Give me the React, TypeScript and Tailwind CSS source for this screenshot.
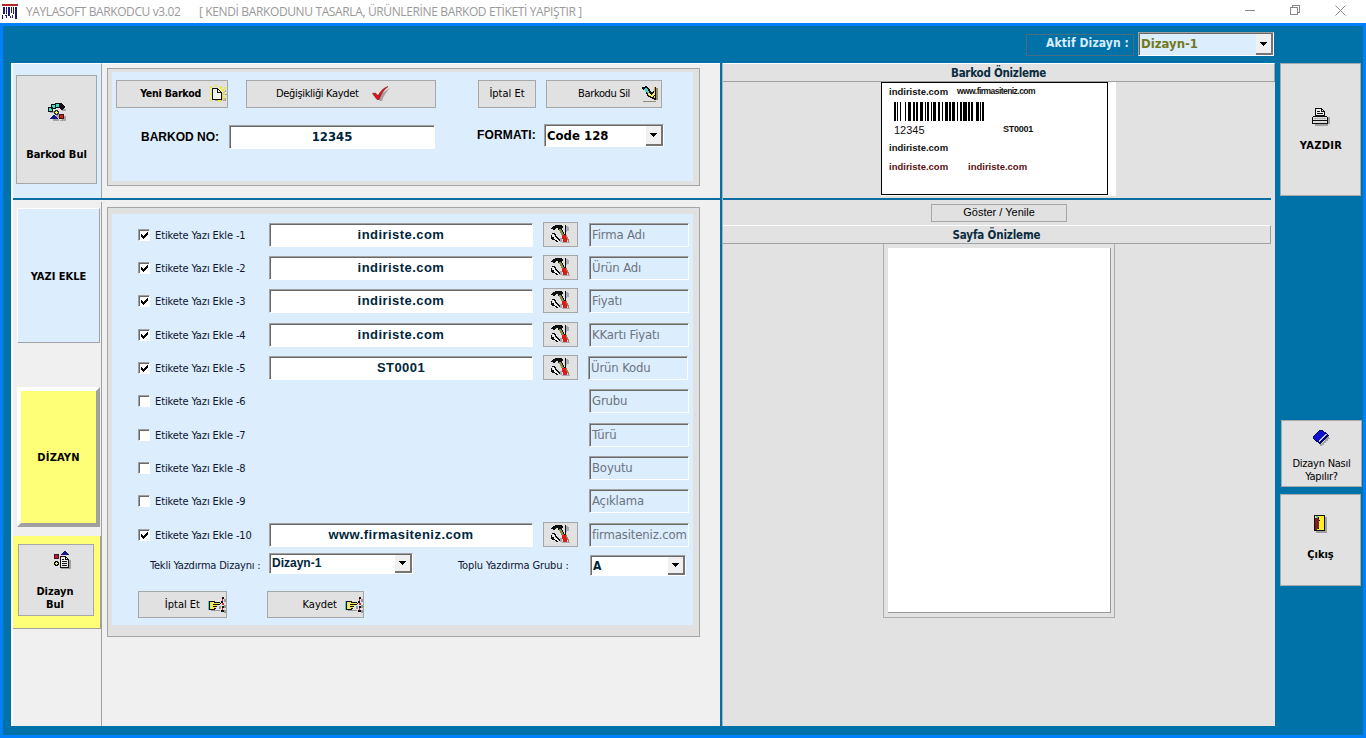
import { useState, type ReactNode } from 'react';
import { clsx } from 'clsx';

interface LabelRow {
  id: number;
  text: string | null;
  field: string;
  gap: string;
}

const ROWS: LabelRow[] = [
  { id: 1, text: 'indiriste.com', field: 'Firma Adı', gap: 'mb-[8px]' },
  { id: 2, text: 'indiriste.com', field: 'Ürün Adı', gap: 'mb-[8px]' },
  { id: 3, text: 'indiriste.com', field: 'Fiyatı', gap: 'mb-[9px]' },
  { id: 4, text: 'indiriste.com', field: 'KKartı Fiyatı', gap: 'mb-[8px]' },
  { id: 5, text: 'ST0001', field: 'Ürün Kodu', gap: 'mb-[8px]' },
  { id: 6, text: null, field: 'Grubu', gap: 'mb-[9px]' },
  { id: 7, text: null, field: 'Türü', gap: 'mb-[8px]' },
  { id: 8, text: null, field: 'Boyutu', gap: 'mb-[8px]' },
  { id: 9, text: null, field: 'Açıklama', gap: 'mb-[9px]' },
  { id: 10, text: 'www.firmasiteniz.com', field: 'firmasiteniz.com', gap: '' },
];

// Code 128 B module widths for "12345": start, data, checksum, stop
const MODULES = '211214' + '123221' + '223211' + '221132' + '221231' + '213212' + '214121' + '2331112';

// classic two-tone 3D edge
const SUNKEN = 'border border-t-[#a0a0a0] border-l-[#a0a0a0] border-r-white border-b-white pt-px shadow-[inset_1px_1px_0_#696969]';

function Barcode() {
  let x = 0;
  const bars: ReactNode[] = [];
  MODULES.split('').forEach((m, i) => {
    const w = Number(m);
    if (i % 2 === 0) bars.push(<rect key={i} x={x} y="0" width={w} height="19" />);
    x += w;
  });
  return (
    <svg width="90" height="19" viewBox="0 0 90 19" shapeRendering="crispEdges" className="block">
      {bars}
    </svg>
  );
}

function Icon({ w, h, className, children }: { w: number; h: number; className?: string; children: ReactNode }) {
  return (
    <svg width={w} height={h} viewBox={`0 0 ${w} ${h}`} shapeRendering="crispEdges" className={clsx('block shrink-0', className)}>
      {children}
    </svg>
  );
}

function AppIcon() {
  return (
    <Icon w={16} h={16}>
      <path fill="#b3262c" d="M0 0h16v2H0z" />
      <path fill="#191970" d="M1 3h2v7H1zM4 3h1v7H4zM6 3h2v9H6zM9 3h1v6H9zM11 3h1v7h-1zM13 3h2v12h-2zM0 11h1v4H0zM3 11h2v1H3zM4 12h1v2H4zM8 12h1v2H8zM10 11h1v3h-1z" />
    </Icon>
  );
}

function ShapesIcon() {
  return (
    <Icon w={19} h={19}>
      <path fill="#a5a5a5" d="M3 9h5v2H3zM15 7h4v2h-4zM15 17h4v2h-6v-1h2zM17 14h2v4h-2zM9 12h4v4H9zM6 17h6v2H6z" />
      <path fill="#3fdccb" stroke="#111" d="M8.500 1.500h4v4h-4zM4.500 2.500h4v4h-4zM1.500 5.500h4v4h-4z" />
      <path fill="#1c0c14" d="M13 1h2v1h1v1h1v1h1v2h-1v1h-1v1h-2V7h-1V6h-1V3h1z" />
      <path fill="#f4ec70" stroke="#333" d="M7.500 9.500h1v-1h2v1h1v2h-1v1h-2v-1h-1z" />
      <path fill="#15158a" d="M6 13h2v1h1v1h1v1h1v1H3v-1h1v-1h1v-1h1z" />
      <path fill="#d4201a" stroke="#401010" d="M12.500 12.500h4v4h-4z" />
    </Icon>
  );
}

function NewIcon() {
  return (
    <Icon w={17} h={19}>
      <path fill="#a8a890" d="M12 8l4-3v1l-3 3h4v1h-4v3h3v3h-3v-1h-1v1H5v-1h7z" />
      <path fill="#e9e64c" d="M0 1h2v2H0zM5 0h2v2H5zM10 1h2v3h-2zM14 2h2v2h-2v2h-2V4h2zM0 8h2v2H0zM0 14h2v2H0zM13 11h2v2h-2zM8 15h3v2H8z" />
      <path fill="#f3ef70" d="M0 3h12v3h3v9H0z" opacity=".6" />
      <path fill="#f3f3ee" stroke="#111" d="M2.500 3.500h5l4 4v7h-9z" />
      <path fill="none" stroke="#111" d="M7.500 3.500v4h4" />
    </Icon>
  );
}

function CheckIcon() {
  return (
    <svg width="18" height="16" viewBox="0 0 18 16" className="block shrink-0">
      <path fill="#a0a0a0" d="M3 9l5 6h2c1-4 4-9 8-13L9 8z" />
      <path fill="#e3101a" stroke="#6c1014" strokeWidth=".5" d="M.500 7.500l3-.5 2.500 3C8 6 11 2 16 .500 11.500 4 9 8 7 13.500H5z" />
    </svg>
  );
}

function EraseIcon() {
  return (
    <Icon w={16} h={17}>
      <path fill="#8d8d78" d="M14 2h2v12h-2zM1 15h13v1H1z" />
      <path fill="#111" d="M0 1h3V0h2v1h1v1h1v1h1v2h1v1h2V5h1V1h2v13h-2v-1h-2v-1H8v-1H6v-1H5V8H4V6H3V4H1V3H0z" />
      <path fill="#55d2c8" d="M2 3h1V2h2v1h1v2h1v2H5V6H3V4H2z" />
      <path fill="#f0e96a" d="M6 7h2v1h3V7h1V6h1v3h-1v1h1v2h-1v-1H9v-1H7V9H6z" />
      <path fill="#111" d="M9 8h1v1H9zM11 10h1v1h-1z" />
      <path fill="#e8a030" d="M12 1h1v5h-1z" />
    </Icon>
  );
}

function ToolsIcon() {
  return (
    <Icon w={19} h={19}>
      <path fill="#a9a9b4" d="M15 1h2v1h1v4h-2v1h-1zM11 17h8v1h-8zM9 13h2v4H9z" />
      <path fill="#101010" d="M14 0h1v10h-1z" />
      <path fill="#101010" d="M7 3h4v2h1v2h1v2h1v3h-3v-2h-1V8H9V6H8V5H7z" />
      <path fill="#8a8c45" d="M8 3h2v2h1v2h1v2h1v3h-2v-2h-1V8H9V6H8z" />
      <path fill="#101010" d="M4 0h7v1h1v2h-2v1H8V3H5v1H4v1H2V4H0V3h1V2h1V1h2z" />
      <path fill="#101010" d="M1 8h3v1h1v2h1v1h1v1h1v1h1v2H8v-1H7v-1H6v-1H5v-1H4v-2H3V9H1zM0 10h1v2h2v2h2v1h1v1h1v1H5v-1H4v-1H1v-1H0z" />
      <path fill="#f4f4f4" d="M2 9h1v2h1v2h2v1h1v2H6v-1H4v-1H3v-2H2z" />
      <path fill="#e01818" d="M11 10h4v2h1v5h-4v-3h-1z" />
      <path fill="#9a7d4c" d="M15 10h1v2h1v2h1v3h-1v-2h-1v-2h-1z" />
    </Icon>
  );
}

function HandIcon() {
  return (
    <Icon w={18} h={16}>
      <path fill="#999" d="M3 13h9v1H3zM16 2h2v3h-2zM16 8h2v3h-2zM16 13h2v3h-2zM11 9h2v3h-2z" />
      <path fill="#45cdd2" d="M0 4h1v9H0z" />
      <path fill="#111" d="M1 4h1v9H1zM2 4h5v1h5v1h1v1h-1v1H9v2H8v2H7v1H2z" />
      <path fill="#f0e65c" d="M2 5h4v1h6v1H7v1h2v1H7v1h1v1H6v1H2z" />
      <path fill="#111" d="M5 7h2v1H5zM5 9h2v1H5zM14 0h2v2h-2zM13 4h2v2h-2zM14 9h2v2h-2zM13 13h3v2h-3z" />
      <path fill="#c7354a" d="M14 2h1v2h-1zM14 6h2v2h-2zM14 11h1v2h-1z" />
    </Icon>
  );
}

function ReportIcon({ className }: { className?: string }) {
  return (
    <Icon w={17} h={18} className={className}>
      <path fill="#a0a0a0" d="M7 16h10v2H7zM15 9h2v8h-2z" />
      <path fill="#191980" d="M10 0h2v1h1v1h1v1h1v1H7V3h1V2h1V1h1z" />
      <path fill="#c8163a" stroke="#401020" d="M.500 3.500h4v4h-4z" />
      <path fill="#e9ec80" stroke="#111" d="M1.500 10.500h2v1h1v2h-1v1h-2v-1h-1v-2h1z" />
      <path fill="#eee" stroke="#111" d="M6.500 5.500h5l3 3v8h-8z" />
      <path fill="#111" d="M8 8h2v1H8zM8 10h5v1H8zM8 12h5v1H8zM8 14h5v1H8zM11 6h1v2h2v1h-3z" />
    </Icon>
  );
}

function PrinterIcon() {
  return (
    <Icon w={18} h={18}>
      <path fill="#a0a0a0" d="M15 9h3v7h-2v2H3v-2h12z" />
      <path fill="#f0f0f0" stroke="#111" d="M3.500 7.500v-7h6l3 3v4z" />
      <path fill="#111" d="M5 3h3v1H5zM5 5h6v1H5zM9 1h1v2h2v1H9z" />
      <path fill="#dedede" stroke="#111" d="M1.500 8.500h13l1 1v6h-15v-6z" />
      <path fill="#111" d="M1 12h14v1H1z" />
      <path fill="#b5b5b5" d="M2 10h12v1H2z" />
    </Icon>
  );
}

function BookIcon() {
  return (
    <Icon w={17} h={17}>
      <path fill="#a0a0a0" d="M15 6h1v2h1v1h-2v2h-2v2h-2v2H9v1H7v-2h2z" />
      <path fill="#1010d0" stroke="#090966" d="M.500 6.500l6-6h3l6 5-8 8h-1l-6-5z" />
      <path fill="#c8c8c8" d="M5 11l8-7 1 1-8 7z" />
      <path fill="#090966" d="M6 12l8-7 1 1-8 8z" />
    </Icon>
  );
}

function DoorIcon() {
  return (
    <Icon w={13} h={18}>
      <path fill="#a0a0a0" d="M11 2h2v16H2v-2h9z" />
      <path fill="#ffef20" stroke="#111" d="M.500.500h10v15H.500z" />
      <path fill="#7b2018" d="M1 3h3v1h1v9H4v1H3v1H1z" />
      <path fill="#65c5c8" d="M2 1h2v2H2z" />
      <path fill="#111" d="M4 2h1v2H4zM5 5h1v1H5zM4 13h1v1H4z" />
    </Icon>
  );
}

function PushButton({ className, children }: { className?: string; children: ReactNode }) {
  return (
    <button type="button" className={clsx('flex shrink-0 items-center border border-[#a5a8ab] bg-[#e1e1e1] text-black', className)}>
      {children}
    </button>
  );
}

function Combo({ value, className, textClass }: { value: string; className?: string; textClass?: string }) {
  return (
    <div className={clsx('flex shrink-0', SUNKEN, className)}>
      <span className={clsx('flex-1 whitespace-nowrap', textClass)}>{value}</span>
      <span className="flex w-[17px] items-center justify-center border-r-2 border-b-2 border-r-[#757575] border-b-[#757575] bg-[#f0f0f0]">
        <Icon w={7} h={4}>
          <path d="M0 0h7v1H0zM1 1h5v1H1zM2 2h3v1H2zM3 3h1v1H3z" />
        </Icon>
      </span>
    </div>
  );
}

function Checkbox({ checked, onChange }: { checked: boolean; onChange: () => void }) {
  return (
    <button
      type="button"
      role="checkbox"
      aria-checked={checked}
      onClick={onChange}
      className={clsx('h-[12px] w-[12px] shrink-0 bg-white pl-px', SUNKEN)}
    >
      {checked && (
        <Icon w={9} h={9}>
          <path d="M1 3h1v1h1v1h1V4h1V3h1V2h1V1h1v3H7v1H6v1H5v1H4v1H3V7H2V6H1z" />
        </Icon>
      )}
    </button>
  );
}

function TitleBar() {
  return (
    <header className="flex h-[23px] shrink-0 items-center bg-white font-['Open_Sans',sans-serif] text-[12px] text-[#999]">
      <div className="ml-[2px] w-[24px]"><AppIcon /></div>
      <span className="w-[173px] whitespace-nowrap tracking-[-0.4px]">YAYLASOFT BARKODCU v3.02</span>
      <span className="flex-1 whitespace-nowrap tracking-[-0.37px]">[ KENDİ BARKODUNU TASARLA, ÜRÜNLERİNE BARKOD ETİKETİ YAPIŞTIR ]</span>
      <div className="mr-[20px] -mt-[3px] flex items-center gap-[35px]">
        <Icon w={10} h={10}><path fill="#888" d="M0 5h10v1H0z" /></Icon>
        <Icon w={10} h={10}><path fill="none" stroke="#888" d="M.500 2.500h7v7h-7zM2.500 2.500v-2h7v7h-2" /></Icon>
        <svg width="11" height="11" viewBox="0 0 11 11"><path stroke="#888" d="M.500.500l10 10M10.500.500l-10 10" /></svg>
      </div>
    </header>
  );
}

function LeftColumn() {
  return (
    <nav className="flex w-[91px] shrink-0 flex-col border-l-2 border-white text-center text-[11px] leading-[13px] font-bold text-black">
      <div className="h-[135px] border-t border-r border-t-white border-r-[#a0a5aa] bg-[#dcedfd] pt-[11px] pl-[3px]">
        <PushButton className="h-[109px] w-[81px] flex-col pt-[26px]">
          <ShapesIcon />
          <span className="mt-[27px] whitespace-nowrap">Barkod Bul</span>
        </PushButton>
      </div>
      <div className="h-[2px] bg-[#0a6ea2]" />
      <div className="mt-[2px] flex flex-1 flex-col border-r border-[#a0a0a0] pl-[4px]">
        <button type="button" className="mt-[6px] h-[135px] w-[83px] border border-t-white border-l-white border-r-[#a0a5aa] border-b-[#a0a5aa] bg-[#dcedfd] pt-px">
          YAZI EKLE
        </button>
        <button type="button" className="mt-[44px] h-[140px] w-[83px] border-4 border-t-white border-l-white border-r-[#a0a0a0] border-b-[#a0a0a0] bg-[#ffff77] tracking-[0.2px]">
          DİZAYN
        </button>
        <div className="mt-[9px] -ml-[4px] h-[93px] w-[88px] border-r border-b border-[#a0a0a0] bg-[#ffff77] pt-[8px] pl-[5px]">
          <PushButton className="h-[72px] w-[76px] flex-col pt-[6px]">
            <ReportIcon className="ml-[13px]" />
            <span className="mt-[16px] w-[50px] pr-[2px]">Dizayn Bul</span>
          </PushButton>
        </div>
      </div>
    </nav>
  );
}

function BarcodeForm() {
  return (
    <section className="ml-[5px] h-[118px] w-[593px] border border-[#a5a5a5] bg-[#e1e1e1] pt-[3px] pl-[4px]">
      <div className="h-[109px] w-[581px] bg-[#dcedfd] pt-[8px] pl-[4px]">
        <div className="flex">
          <PushButton className="h-[28px] w-[112px] justify-end font-bold">
            <span className="mr-[9px] pb-[2px] text-[10.5px] tracking-[-0.2px] whitespace-nowrap">Yeni Barkod</span>
            <NewIcon />
          </PushButton>
          <PushButton className="ml-[18px] h-[28px] w-[190px] pl-[29px]">
            <span className="w-[96px] pb-px text-left tracking-[-0.33px] whitespace-nowrap">Değişikliği Kaydet</span>
            <CheckIcon />
          </PushButton>
          <PushButton className="ml-[42px] h-[28px] w-[58px] justify-center pb-px">İptal Et</PushButton>
          <PushButton className="ml-[10px] h-[28px] w-[116px] justify-end pr-[3px]">
            <span className="mr-[12px] pb-px tracking-[-0.35px] whitespace-nowrap">Barkodu Sil</span>
            <EraseIcon />
          </PushButton>
        </div>
        <div className="mt-[16px] flex items-start pl-[25px] font-bold">
          <span className="mt-[6px] w-[88px] font-['Liberation_Sans',sans-serif] text-[12px] leading-[15px] whitespace-nowrap text-black">BARKOD NO:</span>
          <div className={clsx('mt-px h-[24px] w-[206px] bg-white text-center text-[13px] leading-[20px] text-[#00263c]', SUNKEN)}>12345</div>
          <span className="mt-[4px] ml-[42px] w-[67px] font-['Liberation_Sans',sans-serif] text-[12px] leading-[15px] tracking-[0.15px] whitespace-nowrap text-black">FORMATI:</span>
          <Combo value="Code 128" className="h-[23px] w-[120px] bg-white" textClass="pl-[2px] text-[13px] leading-[19px] text-black" />
        </div>
      </div>
    </section>
  );
}

function LabelForm() {
  const [active, setActive] = useState<number[]>([1, 2, 3, 4, 5, 10]);

  const toggle = (id: number) => {
    setActive((prev) => (prev.includes(id) ? prev.filter((n) => n !== id) : [...prev, id]));
  };

  return (
    <section className="ml-[5px] h-[430px] w-[593px] border border-[#a5a5a5] bg-[#e1e1e1] pt-[6px] pl-[4px]">
      <div className="h-[411px] w-[581px] bg-[#dcedfd] pt-[8px] pl-[26px]">
        {ROWS.map((row) => (
          <div key={row.id} className={clsx('flex h-[25px] items-center', row.gap)}>
            <Checkbox checked={active.includes(row.id)} onChange={() => toggle(row.id)} />
            <span className="ml-[5px] w-[114px] shrink-0 pt-[2px] tracking-[-0.12px] whitespace-nowrap text-[#0c1630]">Etikete Yazı Ekle -{row.id}</span>
            {row.text ? (
              <>
                <div
                  className={clsx(
                    "h-[24px] w-[264px] shrink-0 bg-white text-center font-['Liberation_Sans',sans-serif] text-[13px] leading-[20px] font-bold tracking-[0.45px] text-[#00263c]",
                    SUNKEN,
                  )}
                >
                  {row.text}
                </div>
                <PushButton className="ml-[10px] h-[25px] w-[35px] justify-center pr-px">
                  <ToolsIcon />
                </PushButton>
              </>
            ) : (
              <div className="w-[309px] shrink-0" />
            )}
            <div
              className={clsx(
                'h-[24px] w-[100px] shrink-0 overflow-hidden pl-[2px] text-[13px] leading-[20px] tracking-[-0.15px] whitespace-nowrap text-[#6d7480]',
                row.id === 5 ? 'ml-[10px]' : 'ml-[11px]',
                SUNKEN,
              )}
            >
              {row.field}
            </div>
          </div>
        ))}
        <div className="mt-[6px] flex h-[23px] items-start">
          <span className="mt-[6px] ml-[12px] w-[119px] shrink-0 tracking-[-0.2px] whitespace-nowrap text-[#0c1630]">Tekli Yazdırma Dizaynı :</span>
          <Combo value="Dizayn-1" className="h-[21px] w-[144px] bg-white" textClass="pl-[2px] text-[12px] leading-[17px] font-bold text-[#00263c] font-['Liberation_Sans',sans-serif]" />
          <span className="mt-[6px] ml-[45px] w-[132px] shrink-0 tracking-[-0.12px] whitespace-nowrap text-[#0c1630]">Toplu Yazdırma Grubu :</span>
          <Combo value="A" className="mt-[2px] h-[21px] w-[96px] bg-white" textClass="pl-[2px] text-[12px] leading-[18px] font-bold text-[#00263c]" />
        </div>
        <div className="mt-[15px] flex">
          <PushButton className="h-[27px] w-[89px] justify-end">
            <span className="mr-[8px] pb-px">İptal Et</span>
            <HandIcon />
          </PushButton>
          <PushButton className="ml-[40px] h-[27px] w-[97px] justify-end">
            <span className="mr-[8px] pb-px">Kaydet</span>
            <HandIcon />
          </PushButton>
        </div>
      </div>
    </section>
  );
}

function LabelPreview() {
  return (
    <div className="ml-[158px] h-[114px] w-[235px] bg-white">
      <div className="h-[113px] w-[227px] border border-black pl-[7px] font-['Liberation_Sans',sans-serif] text-[9.5px] leading-[11px] font-bold text-[#111]">
        <div className="flex h-[19px] items-start pt-[3px]">
          <span className="w-[68px]">indiriste.com</span>
          <span className="text-[8.5px] leading-[10px] tracking-[-0.55px]">www.firmasiteniz.com</span>
        </div>
        <div className="pl-[5px]"><Barcode /></div>
        <div className="flex h-[21px] pt-[3px] pl-[5px]">
          <span className="w-[109px] text-[11px] leading-[13px] font-normal">12345</span>
          <span className="text-[9px] tracking-[-0.25px]">ST0001</span>
        </div>
        <div className="h-[19px]">indiriste.com</div>
        <div className="flex text-[#5c1014]">
          <span className="w-[79px]">indiriste.com</span>
          <span>indiriste.com</span>
        </div>
      </div>
    </div>
  );
}

function PreviewPane() {
  return (
    <section className="flex w-[552px] shrink-0 flex-col bg-[#e2e2e2] text-black">
      <h2 className="h-[19px] shrink-0 border-t border-r border-b border-t-white border-r-[#a0a0a0] border-b-[#a0a0a0] text-center text-[11.5px] leading-[18px] font-bold tracking-[-0.25px] text-[#0a2c40]">
        Barkod Önizleme
      </h2>
      <LabelPreview />
      <div className="mt-[2px] h-[2px] w-[548px] shrink-0 bg-[#0a6ea2]" />
      <PushButton className="mt-[4px] ml-[208px] h-[18px] w-[136px] justify-center pb-px font-['Liberation_Sans',sans-serif] text-[11px]">
        Göster / Yenile
      </PushButton>
      <h2 className="mt-[3px] h-[19px] w-[548px] shrink-0 border-t border-r border-b border-t-white border-r-[#a0a0a0] border-b-[#a0a0a0] text-center text-[11.5px] leading-[18px] font-bold tracking-[-0.15px] text-[#0a2c40]">
        Sayfa Önizleme
      </h2>
      <div className="ml-[160px] h-[374px] w-[232px] border border-t-0 border-[#adadad] pt-[4px] pl-[4px]">
        <div className="h-[365px] w-[223px] border-r border-b border-[#999] bg-white" />
      </div>
    </section>
  );
}

function RightColumn() {
  return (
    <aside className="flex w-[88px] shrink-0 flex-col pl-[5px] text-[11px] leading-[13px] text-black">
      <PushButton className="h-[133px] w-[81px] flex-col pt-[44px]">
        <PrinterIcon />
        <span className="mt-[13px] pl-px font-bold tracking-[0.3px]">YAZDIR</span>
      </PushButton>
      <PushButton className="mt-[224px] ml-px h-[67px] w-[81px] flex-col pt-[9px]">
        <BookIcon />
        <span className="mt-[10px] tracking-[-0.25px] whitespace-nowrap">Dizayn Nasıl<br />Yapılır?</span>
      </PushButton>
      <PushButton className="mt-[7px] h-[92px] w-[81px] flex-col pt-[20px]">
        <DoorIcon />
        <span className="mt-[15px] font-bold">Çıkış</span>
      </PushButton>
    </aside>
  );
}

export default function App() {
  return (
    <div className="flex h-[738px] w-[1366px] flex-col overflow-hidden bg-white font-['DejaVu_Sans_Condensed','DejaVu_Sans',sans-serif] text-[11px] leading-[13px]">
      <TitleBar />
      <div className="flex flex-1 flex-col border-[3px] border-[#0080fb] bg-[#0072a8]">
        <div className="flex h-[37px] shrink-0 justify-end pt-[6px] pr-[89px]">
          <div className="mt-[2px] h-[22px] w-[108px] border border-[#4a6b80] pr-[4px] text-right text-[12px] leading-[16px] font-bold tracking-[0.1px] whitespace-nowrap text-[#d9edff]">Aktif Dizayn :</div>
          <Combo value="Dizayn-1" className="ml-[4px] h-[24px] w-[136px] bg-[#dcedfd]" textClass="pl-[2px] text-[13px] leading-[20px] font-bold text-[#73781c]" />
        </div>
        <div className="flex h-[663px] pl-[8px]">
          <div className="flex h-full w-[709px] shrink-0 bg-[#f0f0f0]">
            <LeftColumn />
            <div className="flex w-[618px] flex-col border-t border-white">
              <div className="h-[134px] pt-[4px]"><BarcodeForm /></div>
              <div className="mb-[7px] h-[2px] shrink-0 bg-[#0a6ea2]" />
              <LabelForm />
            </div>
          </div>
          <div className="w-[3px] shrink-0 border-r border-[#a5b5bf] bg-[#0a6ea2]" />
          <PreviewPane />
          <RightColumn />
        </div>
      </div>
    </div>
  );
}
